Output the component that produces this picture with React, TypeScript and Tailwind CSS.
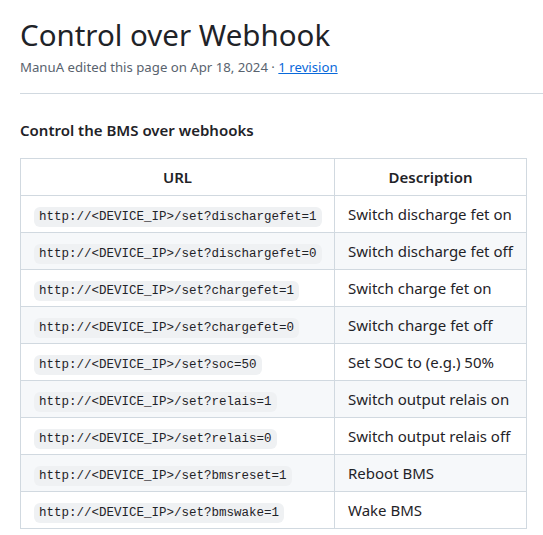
import React from 'react';

const rows = [
  { url: 'http://<DEVICE_IP>/set?dischargefet=1', desc: 'Switch discharge fet on' },
  { url: 'http://<DEVICE_IP>/set?dischargefet=0', desc: 'Switch discharge fet off' },
  { url: 'http://<DEVICE_IP>/set?chargefet=1', desc: 'Switch charge fet on' },
  { url: 'http://<DEVICE_IP>/set?chargefet=0', desc: 'Switch charge fet off' },
  { url: 'http://<DEVICE_IP>/set?soc=50', desc: 'Set SOC to (e.g.) 50%' },
  { url: 'http://<DEVICE_IP>/set?relais=1', desc: 'Switch output relais on' },
  { url: 'http://<DEVICE_IP>/set?relais=0', desc: 'Switch output relais off' },
  { url: 'http://<DEVICE_IP>/set?bmsreset=1', desc: 'Reboot BMS' },
  { url: 'http://<DEVICE_IP>/set?bmswake=1', desc: 'Wake BMS' },
];

export default function App() {
  return (
    <div className="bg-white min-h-[535px] pl-5 pt-[14px] text-[#1f2328] font-['Noto_Sans',sans-serif]">
      <h1 className="text-[29.5px] leading-[42px] font-normal">Control over Webhook</h1>
      <div className="text-[13.2px] leading-5 text-[#59636e] mt-[1px]">
        ManuA edited this page on Apr 18, 2024 · <a className="text-[#0969da] underline">1 revision</a>
      </div>
      <div className="border-b border-[#d1d9e0] mt-[16px]" />
      <h3 className="text-[15px] font-semibold mt-[24px] leading-6">Control the BMS over webhooks</h3>
      <table className="mt-[16px] border-collapse w-[507px] table-fixed">
        <thead>
          <tr>
            <th className="w-[314px] h-[37px] border border-[#d1d9e0] font-semibold text-[15px] text-center">URL</th>
            <th className="h-[37px] border border-[#d1d9e0] font-semibold text-[15px] text-center">Description</th>
          </tr>
        </thead>
        <tbody>
          {rows.map((r, i) => (
            <tr key={r.url} className={i % 2 === 1 ? 'bg-[#f6f8fa]' : 'bg-white'}>
              <td className="h-[37px] border border-[#d1d9e0] px-[13px] whitespace-nowrap">
                <code className="bg-[#eff1f3] rounded-md px-[5px] py-[3px] text-[12.5px] font-['Liberation_Mono',monospace]">
                  {r.url}
                </code>
              </td>
              <td className="h-[37px] border border-[#d1d9e0] px-[13px] text-[15px] whitespace-nowrap">{r.desc}</td>
            </tr>
          ))}
        </tbody>
      </table>
    </div>
  );
}
